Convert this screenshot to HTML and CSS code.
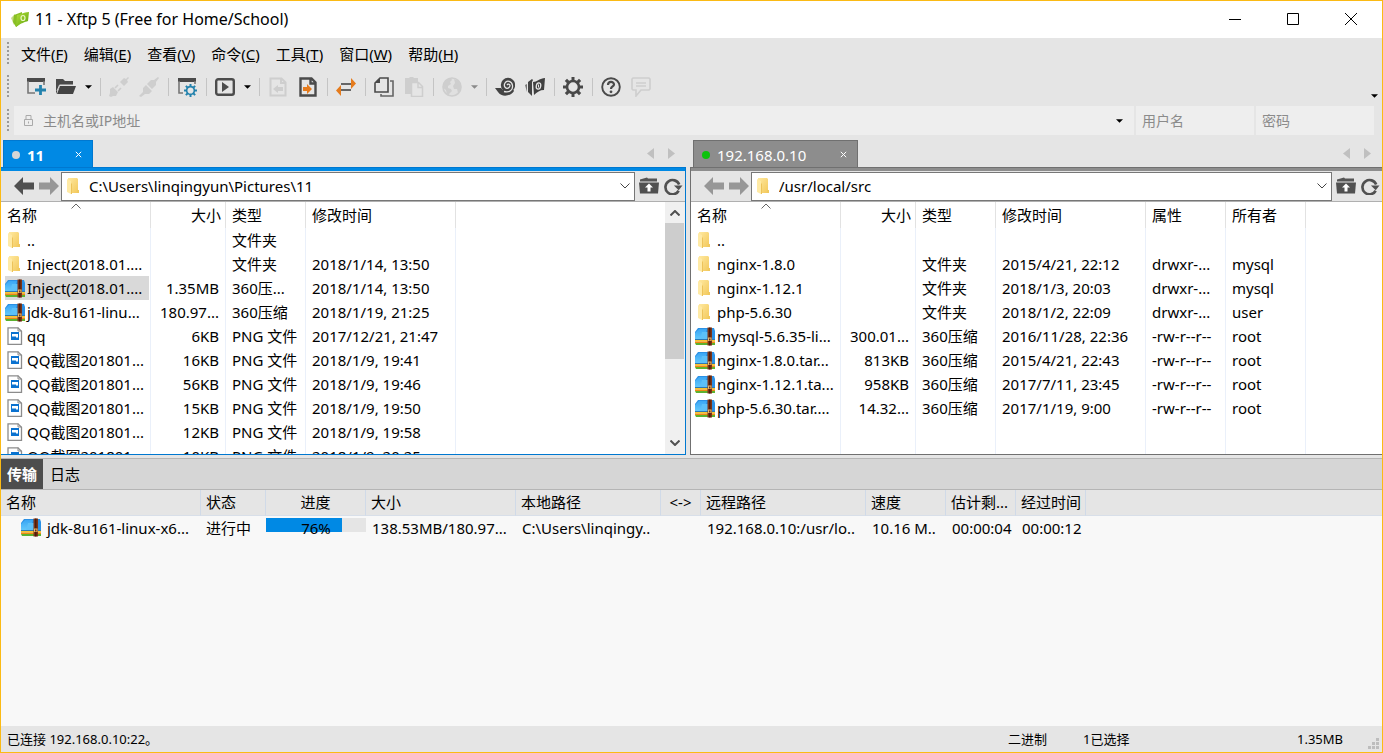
FILE: index.html
```html
<!DOCTYPE html>
<html lang="zh-CN">
<head>
<meta charset="utf-8">
<title>11 - Xftp 5 (Free for Home/School)</title>
<link rel="stylesheet" href="styles.css">
</head>
<body>
<svg class="defs" aria-hidden="true">
  <defs>
    <linearGradient id="g-folder" x1="0" x2="1" y1="0" y2="1"><stop offset="0" stop-color="#ffe9a0"/><stop offset="1" stop-color="#f3c95c"/></linearGradient>
    <linearGradient id="g-blue" x1="0" x2="0" y1="0" y2="1"><stop offset="0" stop-color="#3aa6f4"/><stop offset="1" stop-color="#66cbfc"/></linearGradient>
    <linearGradient id="g-logo" x1="0" x2="1" y1="0" y2="1"><stop offset="0" stop-color="#b4e03c"/><stop offset="1" stop-color="#5fa30c"/></linearGradient>
  </defs>
  <symbol id="folder" viewBox="0 0 16 18"><path d="M2 1h9l1 1v14H5L2 14z" fill="url(#g-folder)"/><path d="M1 2l4 2v13l-4-2z" fill="#ffeaa5"/><path d="M5 6l1 1v10H5z" fill="#edc35a"/><path d="M11 13h2v3h-2z" fill="#f0c960"/></symbol>
  <symbol id="zip" viewBox="0 0 20 19"><path d="M0 5l3-4h9l7 0 1 3v9H0z" fill="#2b90e4"/><path d="M0 6l4-4h8l-1 3-5 8H0z" fill="url(#g-blue)"/><path d="M7 5h10v8H5z" fill="#5cc0f8"/><path d="M0 12h20v1H0z" fill="#2c78b4"/><path d="M0 13h20v1.500H0z" fill="#f7c52e"/><path d="M0 14.500h20V16H0z" fill="#ee8a12"/><path d="M0 16h20v2H1z" fill="#5cb130"/><path d="M12.500.500h4.500v18h-4.500z" fill="#7a3418"/><path d="M14.200.500h1.200v18h-1.200z" fill="#42170a"/><path d="M13 10.500h3.500V14H13z" fill="#e7b96d"/><path d="M14 11.500h1.500v2H14z" fill="#6b2d14"/></symbol>
  <symbol id="png" viewBox="0 0 16 18"><path d="M1 .8H11l3.500 3.500v13H1z" fill="#fff" stroke="#8c8c8c" stroke-width="1.300"/><path d="M11 .5V4h3.500" fill="none" stroke="#8c8c8c"/><path d="M4 5h8v8H4z" fill="#0b72d0"/><path d="M5 7h6v3l-1 1-2-2-1 1-1-1-1 1z" fill="#fff"/></symbol>
  <symbol id="caret" viewBox="0 0 8 4"><path d="M0 0h8L4 4z" fill="currentColor"/></symbol>
  <symbol id="back" viewBox="0 0 20 18"><path d="M0 9l9-9v5.500h11v7H9V18z" fill="currentColor"/></symbol>
  <symbol id="fwd" viewBox="0 0 20 18"><path d="M20 9l-9-9v5.500H0v7h11V18z" fill="currentColor"/></symbol>
  <symbol id="tri-l" viewBox="0 0 7 11"><path d="M7 0v11L0 5.500z" fill="currentColor"/></symbol>
  <symbol id="tri-r" viewBox="0 0 7 11"><path d="M0 0v11l7-5.500z" fill="currentColor"/></symbol>
  <symbol id="down" viewBox="0 0 10 6"><path d="M.5.500L5 5 9.500.5" fill="none" stroke="currentColor"/></symbol>
  <symbol id="up" viewBox="0 0 10 6"><path d="M.5 5.500L5 1l4.500 4.500" fill="none" stroke="currentColor"/></symbol>
  <symbol id="upfolder" viewBox="0 0 20 17"><path d="M1 4V2l7-2 1 1h9v3z" fill="#555"/><path d="M0 5h20l-1 11H1z" fill="#505050"/><path d="M10 6l4 4h-2.500v4h-3v-4H6z" fill="#fff"/></symbol>
  <symbol id="reload" viewBox="0 0 20 19"><path d="M16 14.500A7.500 7.500 0 1 1 16.500 8" fill="none" stroke="#505050" stroke-width="2.800"/><path d="M11 9h9l-4 5z" fill="#505050"/></symbol>
  <symbol id="x" viewBox="0 0 7 7"><path d="M.8.8l5.400 5.400M6.200.8L.8 6.200" stroke="currentColor" fill="none"/></symbol>
  <symbol id="gear" viewBox="0 0 20 20"><circle cx="10" cy="10" r="6" fill="none" stroke="currentColor" stroke-width="2.600"/><path d="M8.500 0h3v4h-3zM8.500 16h3v4h-3zM0 8.500h4v3H0zM16 8.500h4v3h-4zM1.800 4l2.200-2.200 2.800 2.800-2.200 2.200zM13.200 15.400l2.200-2.200 2.800 2.800-2.200 2.200zM18.200 4L16 1.800l-2.800 2.800 2.200 2.200zM6.800 15.400l-2.200-2.200L1.800 16 4 18.200z" fill="currentColor"/></symbol>
</svg>

<div class="window">
  <header class="titlebar">
    <svg class="logo" viewBox="0 0 18 16"><path d="M0 7l4-4v9l-1 2z" fill="#c5da86"/><path d="M3 4l8-3v10l-6 5-3-5z" fill="#88bf24"/><path d="M6 4c4 0 6-3 12-3l-1 9c-3 1-7 2-12 6z" fill="url(#g-logo)"/><ellipse cx="12" cy="7" rx="2" ry="2.500" fill="none" stroke="#eaf7c4" stroke-width="1.200"/></svg>
    <h1 class="title">11 - Xftp 5 (Free for Home/School)</h1>
    <button class="winbtn" aria-label="最小化"><svg width="12" height="12"><path d="M0 6.500h12" stroke="#000"/></svg></button>
    <button class="winbtn" aria-label="最大化"><svg width="12" height="12"><path d="M.5.500h11v11H.5z" stroke="#000" fill="none"/></svg></button>
    <button class="winbtn" aria-label="关闭"><svg width="12" height="12"><path d="M0 0l12 12M12 0L0 12" stroke="#000"/></svg></button>
  </header>

  <nav class="bar menubar"><span class="grip"></span>
    <button>文件(<u>F</u>)</button><button>编辑(<u>E</u>)</button><button>查看(<u>V</u>)</button><button>命令(<u>C</u>)</button><button>工具(<u>T</u>)</button><button>窗口(<u>W</u>)</button><button>帮助(<u>H</u>)</button>
  </nav>

  <div class="bar toolbar"><span class="grip"></span>
    <button class="tool" aria-label="新建"><svg viewBox="0 0 20 20"><path d="M1 1h18v4H1z" fill="#4a4a4a"/><path d="M2 4v12h7M18 4v4" fill="none" stroke="#777" stroke-width="1.600"/><path d="M14.500 8v10M9 13h11" stroke="#2382ad" stroke-width="2.800"/></svg></button>
    <button class="tool" aria-label="打开"><svg viewBox="0 0 20 20"><path d="M0 17V2h7l2 2h8v4H4z" fill="#4a4a4a"/><path d="M4 9h16l-3 8H1z" fill="#444"/><path d="M1 14l2.500-6H17" fill="none" stroke="#ddd"/></svg></button>
    <button class="drop" aria-label="打开选项"><svg><use href="#caret"/></svg></button><i class="sep"></i>
    <button class="tool off" aria-label="重新连接"><svg viewBox="0 0 20 20"><path d="M1 12l3-2 5 5-2 4-3 0-2 1-2-1 1-3zM11 5l4-4 2 1 2-2 1 1-2 2 1 2-4 4z" fill="currentColor"/><path d="M6 11l3-3M9 14l3-3" stroke="currentColor" stroke-width="1.600"/></svg></button>
    <button class="tool off" aria-label="断开"><svg viewBox="0 0 20 20"><path d="M0 19l4-4 0-4 3-3 6 6-3 3-4 0-4 3zM8 7l4-4 3 0 4-3 1 1-3 4v3l-4 4z" fill="currentColor"/></svg></button><i class="sep"></i>
    <button class="tool" aria-label="属性"><svg viewBox="0 0 20 20"><path d="M1 1h18v4H1z" fill="#4a4a4a"/><path d="M2 4v12h4M18 4v3" fill="none" stroke="#777" stroke-width="1.600"/><svg x="7" y="7" width="13" height="13" class="blue"><use href="#gear"/></svg></svg></button><i class="sep"></i>
    <button class="tool" aria-label="传输"><svg viewBox="0 0 20 20"><rect x="1.200" y="2.200" width="17.600" height="15.600" rx="2" fill="none" stroke="#4c4c4c" stroke-width="2.400"/><path d="M7 5l7 5-7 5z" fill="#4c4c4c"/></svg></button>
    <button class="drop" aria-label="传输选项"><svg><use href="#caret"/></svg></button><i class="sep"></i>
    <button class="tool off" aria-label="向左传输"><svg viewBox="0 0 20 20"><path d="M2.500 1.500h11l4 4v13h-15zM13 1v5h5" fill="none" stroke="currentColor" stroke-width="2"/><path d="M5 12l5-4v2h5v4h-5v2z" fill="currentColor"/></svg></button>
    <button class="tool" aria-label="向右传输"><svg viewBox="0 0 20 20"><path d="M2.500 1.500h11l4 4v13h-15zM12.500 1v5.500h5" fill="none" stroke="#4a4a4a" stroke-width="2.400"/><path d="M14 12l-5-5v3H5v4h4v3z" fill="#e57b1d"/></svg></button><i class="sep"></i>
    <button class="tool" aria-label="同步"><svg viewBox="0 0 20 20"><path d="M5 7h10M5 13h10" stroke="#666" stroke-width="2"/><path d="M15 1l5 5.500-5 5.500zM5 8l-5 5.500L5 19z" fill="#e57b1d"/></svg></button><i class="sep"></i>
    <button class="tool" aria-label="复制"><svg viewBox="0 0 20 20"><path d="M6 1h8v14H1V6z" fill="none" stroke="#4a4a4a" stroke-width="1.600"/><path d="M1 6l5-5v5z" fill="#4a4a4a"/><path d="M16 4h3v15H7v-2" fill="none" stroke="#666" stroke-width="1.600"/></svg></button>
    <button class="tool off" aria-label="粘贴"><svg viewBox="0 0 20 20"><path d="M1 1h4l1-1h3l1 1h4v4H8v12H1z" fill="currentColor"/><path d="M7.500 5.500h7l4 4v10h-11zM14 5.500v5h5" fill="#e5e5e5" stroke="currentColor" stroke-width="1.500"/></svg></button><i class="sep"></i>
    <button class="tool off" aria-label="编码"><svg viewBox="0 0 20 20"><circle cx="10" cy="10" r="9" fill="#e0e0e0" stroke="currentColor" stroke-width="1.600"/><path d="M1 8l3-5 5-2 1 2-2 2 1 2-3 2 0 2 3 1 1 2-3 3v2l-2-1-1-5-3-2zM12 2l5 2 2 6-1 4-2 2-1-4-3 0-1-3 2-3z" fill="currentColor"/></svg></button>
    <button class="drop grey" aria-label="编码选项"><svg><use href="#caret"/></svg></button><i class="sep"></i>
    <button class="tool" aria-label="Xshell"><svg viewBox="0 0 20 20"><circle cx="13" cy="8" r="7.200" fill="#444"/><path d="M0 11l6 0 2 2 10-1 1 2c-3 5-12 7-16 1z" fill="#444"/><path d="M9 14.500c6 1.500 9-2 8.500-6S12 2.500 10 6s1.500 7 4 4.500-.5-4.500-2-2.500" fill="none" stroke="#e5e5e5" stroke-width="1.300"/></svg></button>
    <button class="tool" aria-label="Xftp"><svg viewBox="0 0 20 20"><path d="M0 8l2-1v8z" fill="#777"/><path d="M3 5l4-3 1 1-1 2v14l-4-4z" fill="#444"/><path d="M8 5c4 0 7-4 12-4l-1 12c-4 0-7 2-10 5z" fill="#404040"/><ellipse cx="13.500" cy="9" rx="2.200" ry="3.200" transform="rotate(12 13.500 9)" fill="none" stroke="#e5e5e5" stroke-width="1.300"/><path d="M13.500 7.500v3" stroke="#e5e5e5"/></svg></button><i class="sep"></i>
    <button class="tool dark" aria-label="选项"><svg><use href="#gear"/></svg></button><i class="sep"></i>
    <button class="tool" aria-label="帮助"><svg viewBox="0 0 20 20"><circle cx="10" cy="10" r="8.800" fill="none" stroke="#4a4a4a" stroke-width="1.900"/><path d="M7 8c0-4 6-4 6-.5 0 2-3 2-3 4.500" fill="none" stroke="#4a4a4a" stroke-width="2.200"/><circle cx="10" cy="14.800" r="1.400" fill="#4a4a4a"/></svg></button>
    <button class="tool off" aria-label="反馈"><svg viewBox="0 0 20 20"><path d="M2 1h16l1 1v10l-1 1H10l-5 6v-6H2l-1-1V2z" fill="none" stroke="currentColor" stroke-width="1.600"/><path d="M5 6h10M5 9h10" stroke="currentColor" stroke-width="1.600"/></svg></button>
    <button class="drop more" aria-label="更多"><svg><use href="#caret"/></svg></button>
  </div>

  <form class="bar address"><span class="grip"></span>
    <div class="host"><svg class="lock" viewBox="0 0 9 11"><path d="M.5 4.500h8v6h-8zM2 4V.5h5V4M4.500 6.500v2" fill="none" stroke="#aaa"/></svg>
      <input aria-label="主机名" placeholder="主机名或IP地址">
      <button type="button" class="drop" aria-label="历史"><svg><use href="#caret"/></svg></button></div>
    <input class="cred" aria-label="用户名" placeholder="用户名"><input class="cred" type="password" aria-label="密码" placeholder="密码">
  </form>

  <main class="panes">
    <section class="pane local">
      <div class="tabs"><div class="tab"><i class="dot"></i><button class="name">11</button><button class="close" aria-label="关闭标签"><svg><use href="#x"/></svg></button></div>
        <button class="scroll" aria-label="上一个"><svg><use href="#tri-l"/></svg></button><button class="scroll" aria-label="下一个"><svg><use href="#tri-r"/></svg></button></div>
      <div class="frame">
        <div class="pathbar">
          <button class="go dark" aria-label="后退"><svg><use href="#back"/></svg></button><button class="go" aria-label="前进"><svg><use href="#fwd"/></svg></button>
          <div class="combo"><svg class="ficon"><use href="#folder"/></svg><input aria-label="本地路径" value="C:\Users\linqingyun\Pictures\11"><button aria-label="展开"><svg><use href="#down"/></svg></button></div>
          <button class="act" aria-label="上级目录"><svg><use href="#upfolder"/></svg></button><button class="act" aria-label="刷新"><svg><use href="#reload"/></svg></button>
        </div>
        <div class="listing">
          <div class="view">
          <table class="files">
            <colgroup><col class="w150"><col class="w75"><col class="w80"><col class="w150"><col></colgroup>
            <thead><tr><th class="sorted">名称<svg><use href="#up"/></svg></th><th class="num">大小</th><th>类型</th><th>修改时间</th><th></th></tr></thead>
            <tbody>
            <tr><td><span class="file"><svg class="ficon"><use href="#folder"/></svg>..</span></td><td></td><td>文件夹</td><td></td><td></td></tr>
            <tr><td><span class="file"><svg class="ficon"><use href="#folder"/></svg>Inject(2018.01....</span></td><td></td><td>文件夹</td><td>2018/1/14, 13:50</td><td></td></tr>
            <tr class="selected"><td><span class="file"><svg class="zicon"><use href="#zip"/></svg>Inject(2018.01....</span></td><td class="num">1.35MB</td><td>360压...</td><td>2018/1/14, 13:50</td><td></td></tr>
            <tr><td><span class="file"><svg class="zicon"><use href="#zip"/></svg>jdk-8u161-linu...</span></td><td class="num">180.97...</td><td>360压缩</td><td>2018/1/19, 21:25</td><td></td></tr>
            <tr><td><span class="file"><svg class="ficon"><use href="#png"/></svg>qq</span></td><td class="num">6KB</td><td>PNG 文件</td><td>2017/12/21, 21:47</td><td></td></tr>
            <tr><td><span class="file"><svg class="ficon"><use href="#png"/></svg>QQ截图201801...</span></td><td class="num">16KB</td><td>PNG 文件</td><td>2018/1/9, 19:41</td><td></td></tr>
            <tr><td><span class="file"><svg class="ficon"><use href="#png"/></svg>QQ截图201801...</span></td><td class="num">56KB</td><td>PNG 文件</td><td>2018/1/9, 19:46</td><td></td></tr>
            <tr><td><span class="file"><svg class="ficon"><use href="#png"/></svg>QQ截图201801...</span></td><td class="num">15KB</td><td>PNG 文件</td><td>2018/1/9, 19:50</td><td></td></tr>
            <tr><td><span class="file"><svg class="ficon"><use href="#png"/></svg>QQ截图201801...</span></td><td class="num">12KB</td><td>PNG 文件</td><td>2018/1/9, 19:58</td><td></td></tr>
            <tr><td><span class="file"><svg class="ficon"><use href="#png"/></svg>QQ截图201801...</span></td><td class="num">10KB</td><td>PNG 文件</td><td>2018/1/9, 20:25</td><td></td></tr>
            </tbody>
          </table>
          </div>
          <div class="scrollbar"><button aria-label="向上滚动"><svg><use href="#up"/></svg></button><div class="track"><div class="thumb"></div></div><button aria-label="向下滚动"><svg><use href="#down"/></svg></button></div>
        </div>
      </div>
    </section>

    <section class="pane remote">
      <div class="tabs"><div class="tab"><i class="dot"></i><button class="name">192.168.0.10</button><button class="close" aria-label="关闭标签"><svg><use href="#x"/></svg></button></div>
        <button class="scroll" aria-label="上一个"><svg><use href="#tri-l"/></svg></button><button class="scroll" aria-label="下一个"><svg><use href="#tri-r"/></svg></button></div>
      <div class="frame">
        <div class="pathbar">
          <button class="go" aria-label="后退"><svg><use href="#back"/></svg></button><button class="go" aria-label="前进"><svg><use href="#fwd"/></svg></button>
          <div class="combo"><svg class="ficon"><use href="#folder"/></svg><input aria-label="远程路径" value="/usr/local/src"><button aria-label="展开"><svg><use href="#down"/></svg></button></div>
          <button class="act" aria-label="上级目录"><svg><use href="#upfolder"/></svg></button><button class="act" aria-label="刷新"><svg><use href="#reload"/></svg></button>
        </div>
        <div class="listing">
          <div class="view">
          <table class="files">
            <colgroup><col class="w150"><col class="w75"><col class="w80"><col class="w150"><col class="w80"><col class="w80"><col></colgroup>
            <thead><tr><th class="sorted">名称<svg><use href="#up"/></svg></th><th class="num">大小</th><th>类型</th><th>修改时间</th><th>属性</th><th>所有者</th><th></th></tr></thead>
            <tbody>
            <tr><td><span class="file"><svg class="ficon"><use href="#folder"/></svg>..</span></td><td></td><td></td><td></td><td></td><td></td><td></td></tr>
            <tr><td><span class="file"><svg class="ficon"><use href="#folder"/></svg>nginx-1.8.0</span></td><td></td><td>文件夹</td><td>2015/4/21, 22:12</td><td>drwxr-...</td><td>mysql</td><td></td></tr>
            <tr><td><span class="file"><svg class="ficon"><use href="#folder"/></svg>nginx-1.12.1</span></td><td></td><td>文件夹</td><td>2018/1/3, 20:03</td><td>drwxr-...</td><td>mysql</td><td></td></tr>
            <tr><td><span class="file"><svg class="ficon"><use href="#folder"/></svg>php-5.6.30</span></td><td></td><td>文件夹</td><td>2018/1/2, 22:09</td><td>drwxr-...</td><td>user</td><td></td></tr>
            <tr><td><span class="file"><svg class="zicon"><use href="#zip"/></svg>mysql-5.6.35-li...</span></td><td class="num">300.01...</td><td>360压缩</td><td>2016/11/28, 22:36</td><td>-rw-r--r--</td><td>root</td><td></td></tr>
            <tr><td><span class="file"><svg class="zicon"><use href="#zip"/></svg>nginx-1.8.0.tar...</span></td><td class="num">813KB</td><td>360压缩</td><td>2015/4/21, 22:43</td><td>-rw-r--r--</td><td>root</td><td></td></tr>
            <tr><td><span class="file"><svg class="zicon"><use href="#zip"/></svg>nginx-1.12.1.ta...</span></td><td class="num">958KB</td><td>360压缩</td><td>2017/7/11, 23:45</td><td>-rw-r--r--</td><td>root</td><td></td></tr>
            <tr><td><span class="file"><svg class="zicon"><use href="#zip"/></svg>php-5.6.30.tar....</span></td><td class="num">14.32...</td><td>360压缩</td><td>2017/1/19, 9:00</td><td>-rw-r--r--</td><td>root</td><td></td></tr>
            <tr class="rest"><td></td><td></td><td></td><td></td><td></td><td></td><td></td></tr>
            </tbody>
          </table>
          </div>
        </div>
      </div>
    </section>
  </main>

  <section class="transfers">
    <div class="subtabs"><button class="current">传输</button><button>日志</button></div>
    <table class="queue">
      <colgroup><col class="w200"><col class="w65"><col class="w100"><col class="w150"><col class="w145"><col class="w40"><col class="w165"><col class="w80"><col class="w70"><col class="w70"><col></colgroup>
      <thead><tr><th>名称</th><th>状态</th><th class="mid">进度</th><th>大小</th><th>本地路径</th><th class="mid">&lt;-&gt;</th><th>远程路径</th><th>速度</th><th>估计剩...</th><th>经过时间</th><th></th></tr></thead>
      <tbody><tr><td><span class="file"><svg class="zicon"><use href="#zip"/></svg>jdk-8u161-linux-x6...</span></td><td>进行中</td><td class="meter"><div class="progress"><div class="done" style="width:76%"></div><span class="pct">76%</span></div></td><td>138.53MB/180.97...</td><td>C:\Users\linqingy..</td><td></td><td>192.168.0.10:/usr/lo..</td><td>10.16 M..</td><td>00:00:04</td><td>00:00:12</td><td></td></tr></tbody>
    </table>
  </section>

  <footer class="status"><span class="conn">已连接 192.168.0.10:22。</span><span class="mode">二进制</span><span class="sel">1已选择</span><span class="total">1.35MB</span>
    <svg class="sizer" viewBox="0 0 11 11"><path d="M8 0h3v3H8zM4 4h3v3H4zM8 4h3v3H8zM0 8h3v3H0zM4 8h3v3H4zM8 8h3v3H8z" fill="#bdbdbd"/></svg></footer>
</div>
</body>
</html>
```

FILE: styles.css
```css
* { box-sizing: border-box; }
body { margin: 0; color: #000; background: #e5e5e5; font: 15px/20px "Noto Sans", "Noto Sans CJK SC", sans-serif; }
button { border: 0; padding: 0; margin: 0; background: none; font: inherit; color: inherit; display: flex; align-items: center; justify-content: center; white-space: nowrap; }
input { border: 0; padding: 0; margin: 0; background: none; font: inherit; color: inherit; outline: 0; min-width: 0; }
svg { display: block; flex: none; }
.defs { position: absolute; width: 0; height: 0; }

.window { height: 100vh; display: flex; flex-direction: column; border: 1px solid #fbba14; background: #e5e5e5; overflow: hidden; }

.titlebar { display: flex; align-items: center; flex: none; height: 37px; background: #fff; padding: 0 2px 2px 10px; }
.logo { width: 18px; height: 16px; }
.title { flex: 1; margin: 0 0 0 6px; font-size: 16px; font-weight: 400; }
.winbtn { width: 58px; height: 35px; }

.bar { display: flex; align-items: center; flex: none; padding-left: 6px; }
.grip { width: 2px; height: 23px; background: repeating-linear-gradient(#9a9a9a 0 2px, transparent 2px 4px); }
.menubar { height: 31px; gap: 16px; }
.menubar .grip { margin-right: -4px; }
.toolbar { height: 35px; }
.toolbar .grip { margin-right: 12px; }
.tool { width: 30px; height: 30px; }
.tool > svg { width: 20px; height: 20px; }
.off { color: #cecece; }
.dark { color: #484848; }
.blue { color: #2382ad; }
.drop { width: 15px; height: 30px; color: #000; }
.drop svg { width: 7px; height: 4px; }
.drop.grey { color: #8a8a8a; }
.more { margin-left: auto; align-items: flex-end; padding-bottom: 4px; }
.sep { width: 8px; height: 18px; background: linear-gradient(#c4c4c4, #c4c4c4) center / 1px 100% no-repeat; }

.address { height: 33px; padding-right: 8px; gap: 2px; color: #888; font-size: 14px; }
.address .grip { margin-right: 3px; }
.host { flex: 1; display: flex; align-items: center; height: 29px; background: #eee; padding: 0 7px 0 10px; }
.host input { flex: 1; margin-left: 10px; }
.lock { width: 9px; height: 11px; }
.cred { width: 118px; height: 29px; background: #eee; padding: 0 6px; }
::placeholder { color: #8b8b8b; opacity: 1; }

.panes { flex: 320 1 0; min-height: 0; display: grid; grid-template-columns: 685fr 692fr; gap: 4px; padding-bottom: 3px; }
.pane { display: flex; flex-direction: column; min-width: 0; min-height: 0; }
.local { --edge: #0078d0; --fill: #0089e4; }
.remote { --edge: #707070; --fill: #8d8d8d; }
.tabs { display: flex; align-items: center; flex: none; height: 30px; padding: 3px 4px 0 2px; }
.tab { display: flex; align-items: center; height: 27px; margin-right: auto; padding: 1px 10px 0 8px; border: 1px solid var(--edge); border-bottom: 0; background: var(--fill); color: #fff; }
.dot { width: 8px; height: 8px; border-radius: 50%; background: #d6d6d6; }
.remote .dot { background: #0cc20c; }
.name { margin-left: 7px; }
.local .name { font-weight: 700; }
.local .close { margin-left: 31px; }
.remote .close { margin-left: 34px; }
.remote .tabs { padding-left: 3px; }
.close svg { width: 7px; height: 7px; }
.scroll { width: 21px; color: #c0c0c0; }
.scroll svg { width: 7px; height: 11px; }
.frame { flex: 1; min-height: 0; display: flex; flex-direction: column; border: 1px solid var(--edge); border-left-width: 0; }
.remote .frame { border-left-width: 1px; border-right-width: 0; }
.pathbar { display: flex; align-items: center; flex: none; height: 34px; border-top: 3px solid var(--fill); border-bottom: 1px solid #b0b0b0; padding-left: 10px; }
.go { width: 25px; color: #979797; }
.go.dark { color: #505050; }
.go svg { width: 20px; height: 18px; }
.combo { flex: 1; display: flex; align-items: center; height: 29px; margin-right: 2px; border: 1px solid #777; background: #fff; padding: 0 4px; min-width: 0; }
.combo input { flex: 1; margin-left: 7px; }
.combo button svg { width: 10px; height: 6px; color: #444; }
.ficon { width: 16px; height: 18px; }
.zicon { width: 20px; height: 19px; }
.act { width: 24px; }
.act svg { width: 20px; height: 18px; }
.listing { flex: 1; min-height: 0; display: flex; background: #fff; }
.view { flex: 1; min-width: 0; overflow: hidden; }

table { table-layout: fixed; border-collapse: separate; border-spacing: 0; width: 100%; }
th, td { padding: 0; font-weight: 400; text-align: left; white-space: nowrap; overflow: hidden; }
.w40 { width: 40px; } .w65 { width: 65px; } .w70 { width: 70px; } .w75 { width: 75px; } .w80 { width: 80px; } .w100 { width: 100px; }
.w145 { width: 145px; } .w150 { width: 150px; } .w165 { width: 165px; } .w200 { width: 200px; }
.files { height: 100%; }
.files th { height: 26px; padding: 0 4px 0 6px; border-right: 1px solid #e2e2e2; }
.files td { height: 24px; padding: 0 6px; border-right: 1px solid #eaf0fa; }
.files th:last-child, .files td:last-child { border-right: 0; }
.files td:first-child { padding: 0 1px 0 4px; }
.files .rest td { height: auto; }
.files .num, .files th.num { text-align: right; }
.files .sorted { position: relative; }
.sorted svg { position: absolute; left: 70px; top: 1px; width: 10px; height: 6px; color: #666; }
.file { display: flex; align-items: center; height: 24px; }
.file .ficon { margin: 0 4px 0 2px; }
.file .zicon { margin-right: 2px; }
.selected .file { background: #d9d9d9; }

.scrollbar { width: 20px; display: flex; flex-direction: column; background: #f0f0f0; }
.scrollbar button { height: 21px; }
.scrollbar button svg { width: 10px; height: 6px; color: #505050; stroke-width: 2; }
.track { flex: 1; }
.thumb { height: 65%; background: #cdcdcd; margin-right: 1px; }

.transfers { flex: 269 1 0; min-height: 0; background: #f8f8f8; border-top: 1px solid #b5b5b5; overflow: hidden; }
.subtabs { display: flex; height: 31px; background: #d6d6d6; border-bottom: 1px solid #b5b5b5; }
.subtabs button { padding: 0 7px; }
.subtabs .current { padding: 0 6px; background: #4d4d4d; color: #fff; font-weight: 700; }
.queue thead { background: #e5e5e5; }
.queue th { height: 26px; padding: 0 5px; border-right: 1px solid #d0dae8; border-bottom: 1px solid #d8dfe9; }
.queue th:last-child { border-right: 0; }
.queue td { height: 24px; padding: 0 0 0 6px; }
.queue td:nth-child(2) { padding-left: 5px; }
.queue td:first-child { padding-left: 20px; }
.queue .file .zicon { margin-right: 6px; }
.queue .mid { text-align: center; }
.queue .meter { padding: 0; overflow: visible; vertical-align: top; }
.progress { position: relative; height: 14px; margin-top: 2px; background: #e5e5e5; }
.done { height: 100%; background: #0089e4; }
.pct { position: absolute; left: 0; right: 0; top: 0; text-align: center; }

.status { display: flex; align-items: center; flex: none; height: 26px; padding: 0 3px 0 6px; font-size: 13px; }
.conn { flex: 1; }
.mode { width: 75px; }
.sel { width: 214px; }
.total { width: 71px; }
.sizer { width: 11px; height: 11px; align-self: flex-end; margin-bottom: 3px; }
```
